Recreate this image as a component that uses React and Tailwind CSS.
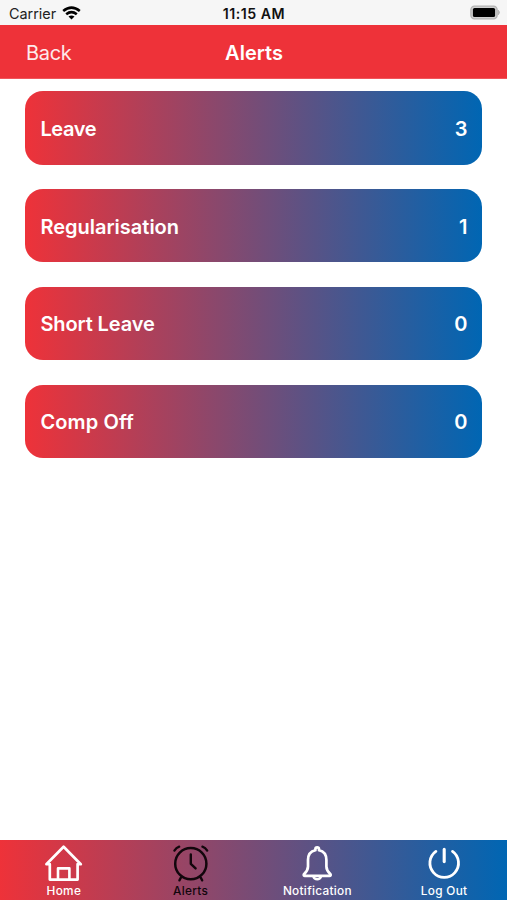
// App.jsx — alerts screen: status bar, header, alert cards, bottom tabs

const ALERTS = [
  { label: 'Leave',          count: 3, tracking: 'tracking-[-0.4px]' },
  { label: 'Regularisation', count: 1, tracking: 'tracking-[0px]' },
  { label: 'Short Leave',    count: 0, tracking: 'tracking-[-0.1px]' },
  { label: 'Comp Off',       count: 0, tracking: 'tracking-[0.12px]' },
];

const TABS = [
  { id: 'home',         label: 'Home',         Icon: HomeIcon },
  { id: 'alerts',       label: 'Alerts',       Icon: AlarmIcon },
  { id: 'notification', label: 'Notification', Icon: BellIcon },
  { id: 'logout',       label: 'Log Out',      Icon: PowerIcon },
];

function TabSvg({ children }){
  return (
    <svg width="40" height="38" viewBox="0 0 40 38" fill="none" stroke="currentColor"
      strokeWidth="2.6" strokeLinecap="round" strokeLinejoin="round">
      {children}
    </svg>
  );
}

function HomeIcon(){
  return (
    <TabSvg>
      <path d="M6.8 20.2H3.4L20.6 2.8L37.8 20.2H34.6V35.6H6.8Z" strokeWidth="2.7"/>
      <path d="M15 35.3V24.4H26.4V35.3" strokeWidth="2.6"/>
    </TabSvg>
  );
}

function AlarmIcon(){
  return (
    <TabSvg>
      <circle cx="20.8" cy="19.7" r="15.6" strokeWidth="2.5"/>
      <path d="M20.8 10.4V19.8L25.6 24.4" strokeWidth="2.4"/>
      <path d="M4.4 6.6Q6.2 3.6 9.2 2.6M37.2 6.6Q35.4 3.6 32.4 2.6" strokeWidth="2.3"/>
      <path d="M11 33.4L9.4 36.4M30.6 33.4L32.2 36.4" strokeWidth="2.3"/>
    </TabSvg>
  );
}

function BellIcon(){
  return (
    <TabSvg>
      <path d="M18.4 6.2V5Q18.4 3.4 20.2 3.4T22 5V6.2C27 7.2 29.4 11 29.4 16V22.4C29.4 26.4 31 27.8 33.6 30.4Q34 31.8 32.6 31.8H7.8Q6.4 31.8 6.8 30.4C9.4 27.8 11 26.4 11 22.4V16C11 11 13.4 7.2 18.4 6.2Z" strokeWidth="2.7"/>
      <path d="M16.4 32.6Q17.2 35.2 20.2 35.2T24 32.6" strokeWidth="2.4"/>
    </TabSvg>
  );
}

function PowerIcon(){
  return (
    <TabSvg>
      <path d="M11.9 7.4A14.3 14.3 0 1 0 28.5 7.4" strokeWidth="2.8"/>
      <path d="M20.2 5.4V17.6" strokeWidth="3.1"/>
    </TabSvg>
  );
}

function StatusBar(){
  return (
    <div className="h-[25px] shrink-0 grid grid-cols-3 items-center bg-[#f6f6f6] pl-[9px] pr-[6px] pt-[2px] text-black">
      <div className="flex items-center gap-[6px]">
        <span className="pt-px text-[14.4px] leading-none tracking-[-0.02px] text-[#222]">Carrier</span>
        <svg width="19" height="14" viewBox="0 0 19 14" fill="none" stroke="black" strokeWidth="2.6" className="-mt-[2px]">
          <path d="M1.2 5.1Q9.5 -1.7 17.8 5.1"/>
          <path d="M4.2 8.3Q9.5 4 14.8 8.3"/>
          <path d="M6.5 10.5Q9.5 8.4 12.5 10.5L9.5 13.6Z" fill="black" stroke="none"/>
        </svg>
      </div>
      <div className="-ml-[2px] pt-px text-center text-[14.2px] font-semibold leading-none tracking-[0.5px] text-[#111]">11:15 AM</div>
      <svg width="31" height="15" viewBox="0 0 31 15" className="justify-self-end -mt-[2px]">
        <rect x="0.9" y="1.1" width="26.2" height="12.8" rx="3.6" fill="#d0d0d0" stroke="#b4b4b4" strokeWidth="1.4"/>
        <path d="M28.3 5.3Q30.6 7.5 28.3 9.7Z" fill="#b4b4b4" stroke="#b4b4b4"/>
        <rect x="2.9" y="3" width="22.2" height="9" rx="1.6" fill="black"/>
      </svg>
    </div>
  );
}

function Header(){
  return (
    <header className="h-[54px] shrink-0 grid grid-cols-3 items-center bg-[#ee3239] px-[26px] pt-[2px] text-[20px] text-white border-b border-b-[#f0555b]">
      <button className="text-left text-[20px] tracking-[-0.3px] text-white/90">Back</button>
      <h1 className="pl-px text-center text-[20px] font-semibold">Alerts</h1>
    </header>
  );
}

function AlertCard({ label, count, tracking }){
  return (
    <div className="h-[73.3px] flex items-center justify-between rounded-[18px] bg-linear-to-r/srgb from-[#ee3239] to-[#0066b3] px-[15px] pt-[1.6px] text-[20px] font-[580] text-white">
      <span className={tracking}>{label}</span>
      <span>{count}</span>
    </div>
  );
}

function TabBar({ active }){
  return (
    <nav className="h-[60px] shrink-0 grid grid-cols-4 bg-linear-to-r/srgb from-[#ee3239] to-[#0066b3]">
      {TABS.map(({ id, label, Icon }) => (
        <button
          key={id}
          className={`flex flex-col items-center pt-[4px] ${id === active ? 'text-[#12060c]' : 'text-white'}`}
        >
          <Icon/>
          <span className="mt-[2px] pl-px text-[11.8px] font-medium leading-[14px] tracking-[0.3px]">{label}</span>
        </button>
      ))}
    </nav>
  );
}

export default function App(){
  return (
    <div className="h-screen flex flex-col overflow-hidden bg-white font-['Inter',sans-serif]">
      <StatusBar/>
      <Header/>
      <main className="flex-1 flex flex-col gap-[24.4px] pl-[25.4px] pr-[24.6px] pt-[12.45px]">
        {ALERTS.map(a => <AlertCard key={a.label} {...a}/>)}
      </main>
      <TabBar active="alerts"/>
    </div>
  );
}
